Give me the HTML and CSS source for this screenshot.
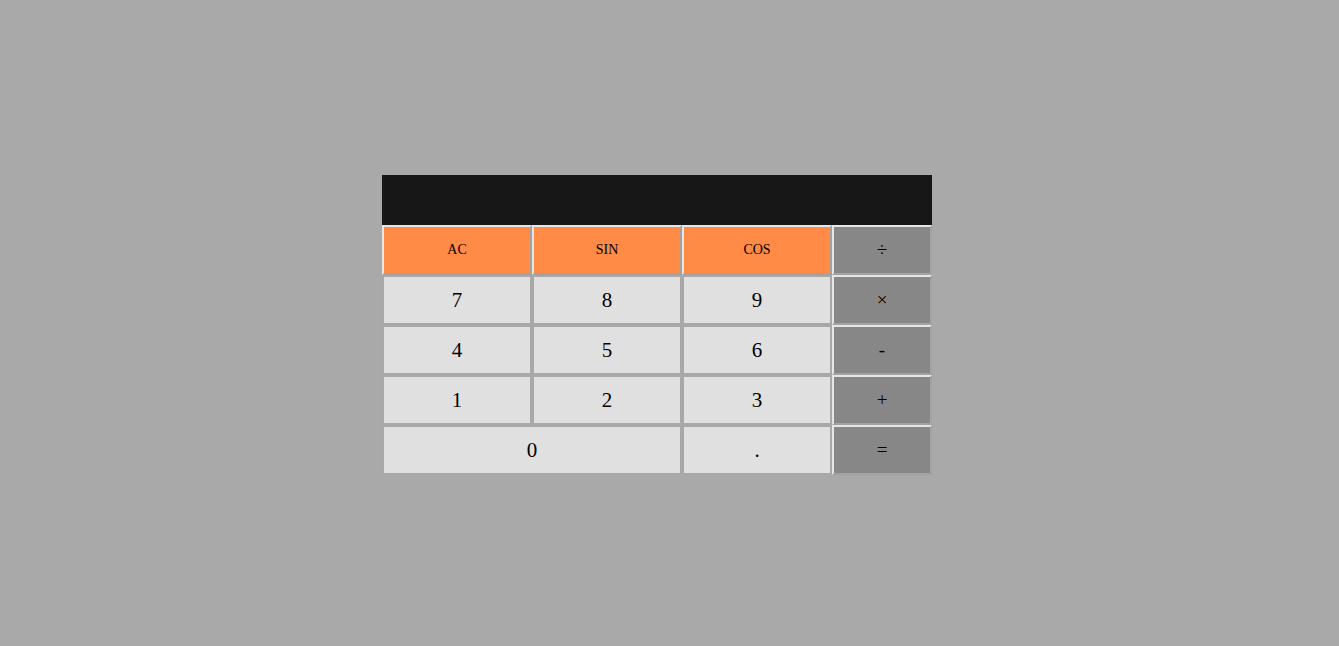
FILE: index.html
```html
<!DOCTYPE html>
<html>
<head>
<meta charset="utf-8">
<link rel="stylesheet" href="styles.css">
</head>
<body>
<div class="calc">
  <div class="display"></div>
  <div class="keys">
    <button class="key fn">AC</button>
    <button class="key fn">SIN</button>
    <button class="key fn">COS</button>
    <button class="key op">÷</button>
    <button class="key num">7</button>
    <button class="key num">8</button>
    <button class="key num">9</button>
    <button class="key op">×</button>
    <button class="key num">4</button>
    <button class="key num">5</button>
    <button class="key num">6</button>
    <button class="key op">-</button>
    <button class="key num">1</button>
    <button class="key num">2</button>
    <button class="key num">3</button>
    <button class="key op">+</button>
    <button class="key num wide">0</button>
    <button class="key num">.</button>
    <button class="key op">=</button>
  </div>
</div>
</body>
</html>
```
FILE: styles.css
```css
html, body {
  margin: 0;
  padding: 0;
}
body {
  background: #a9a9a9;
  height: 646px;
  font-family: "Liberation Serif", "DejaVu Serif", serif;
}
.calc {
  width: 575px;
  margin: 0 auto;
  padding-top: 175px;
}
.display {
  width: 550px;
  height: 50px;
  background: #171717;
}
.keys {
  width: 550px;
  display: grid;
  grid-template-columns: 150px 150px 150px 100px;
  grid-auto-rows: 50px;
}
.key {
  margin: 0;
  padding: 0;
  box-sizing: border-box;
  border-width: 2px;
  border-style: solid;
  border-color: #e6e6e6 #a2a2a2 #a2a2a2 #e6e6e6;
  font-family: "Liberation Serif", "DejaVu Serif", serif;
  color: #000;
  display: flex;
  align-items: center;
  justify-content: center;
}
.fn {
  background: #ff8b47;
  font-size: 14px;
}
.num {
  background: #e0e0e0;
  font-size: 21px;
  border-color: #a8a8a8;
}
.op {
  background: #878787;
  font-size: 19px;
}
.wide {
  grid-column: span 2;
}
```
